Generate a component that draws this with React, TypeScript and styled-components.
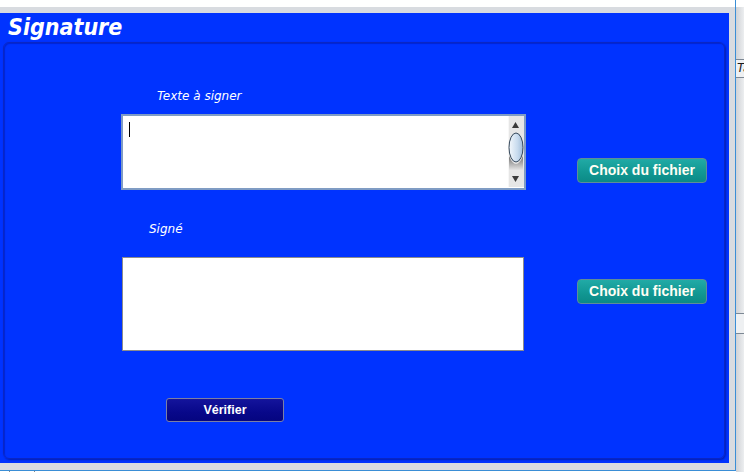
import React from "react";
import styled, { createGlobalStyle } from "styled-components";

const GlobalStyle = createGlobalStyle`
  html, body { margin: 0; padding: 0; background: #ffffff; }
  body { font-family: "DejaVu Sans", Verdana, sans-serif; }
  * { box-sizing: border-box; }
`;

const Screen = styled.div`
  display: flex;
  width: 744px;
  height: 472px;
  overflow: hidden;
  background: #ffffff;
`;

const MainColumn = styled.div`
  display: flex;
  flex-direction: column;
  width: 736px;
  flex: none;
`;

const Frame = styled.div`
  display: flex;
  flex-direction: column;
  height: 471px;
  border-right: 1px solid #3a8ed6;
  border-bottom: 1px solid #3a8ed6;
  background: #d8dbe0;
`;

const FrameTop = styled.div`
  height: 7px;
  flex: none;
  background: #ffffff;
`;

const FrameBody = styled.div`
  flex: 1;
  min-height: 0;
  display: flex;
  padding: 6px 6px 7px 0;
`;

const Window = styled.section`
  flex: 1;
  display: flex;
  flex-direction: column;
  background: #0033ff;
  padding: 0 4px 4px 3px;
`;

const Title = styled.h1`
  margin: 0;
  height: 29px;
  flex: none;
  padding-left: 5px;
  font: italic bold 23px/29px "DejaVu Sans Condensed", "DejaVu Sans", Verdana, sans-serif;
  font-stretch: condensed;
  color: #ffffff;
`;

const Panel = styled.div`
  flex: 1;
  display: flex;
  flex-direction: column;
  align-items: flex-start;
  padding: 46px 0 0 117px;
  border: 1px solid #0a26c4;
  border-radius: 6px;
  box-shadow: 1px 1px 2px rgba(0, 0, 90, 0.45), inset 1px 1px 1px rgba(0, 0, 110, 0.3);
`;

const FieldLabel = styled.div<{ $indent: number; $gap?: number }>`
  margin-left: ${(p) => p.$indent}px;
  margin-top: ${(p) => p.$gap ?? 0}px;
  font: italic 12px/15px "DejaVu Sans", Verdana, sans-serif;
  color: #ffffff;
`;

const FieldRow = styled.div<{ $gap: number }>`
  display: flex;
  align-items: flex-start;
  margin-top: ${(p) => p.$gap}px;
`;

const FieldColumn = styled.div`
  width: 456px;
  flex: none;
`;

const SourceBox = styled.div`
  display: flex;
  width: 405px;
  height: 76px;
  border: 2px solid #7f9cc4;
  background: #ffffff;
`;

const SourceText = styled.div`
  flex: 1;
  padding: 6px 0 0 6px;
`;

const Caret = styled.span`
  display: block;
  width: 1px;
  height: 15px;
  background: #000000;
`;

const ScrollTrack = styled.div`
  width: 16px;
  flex: none;
  display: flex;
`;

const SignedBox = styled.div`
  margin-left: 1px;
  width: 402px;
  height: 94px;
  border: 1px solid #8c8c8c;
  background: #ffffff;
`;

const FileButton = styled.button<{ $offset: number }>`
  margin-top: ${(p) => p.$offset}px;
  width: 130px;
  height: 25px;
  padding: 0;
  border: 1px solid #5f8d98;
  border-radius: 4px;
  background: linear-gradient(#21aaa6, #129893 55%, #0b8a86);
  color: #fffef4;
  font: bold 14px/23px "Liberation Sans", Arial, sans-serif;
  text-align: center;
  cursor: pointer;
`;

const VerifyButton = styled.button`
  margin-top: 47px;
  margin-left: 45px;
  width: 118px;
  height: 24px;
  padding: 0;
  border: 1px solid #7c80a4;
  border-radius: 3px;
  background: linear-gradient(#14149c, #08088a 60%, #050580);
  color: #ffffff;
  font: bold 12.5px/22px "Liberation Sans", Arial, sans-serif;
  text-align: center;
  cursor: pointer;
`;

const BottomLine = styled.div`
  height: 1px;
  display: flex;
  background: #ffffff;
`;

const Tick = styled.span<{ $left: number }>`
  margin-left: ${(p) => p.$left}px;
  width: 1px;
  height: 1px;
  background: #8a8a8a;
`;

const SideStrip = styled.aside`
  width: 8px;
  flex: none;
  display: flex;
  flex-direction: column;
  background: linear-gradient(90deg, #d0d2d6, #eceef0);
`;

const SideTop = styled.div`
  height: 7px;
  flex: none;
  background: #ffffff;
`;

const SideGap = styled.div<{ $h: number }>`
  height: ${(p) => p.$h}px;
  flex: none;
`;

const SideTab = styled.div<{ $h: number }>`
  height: ${(p) => p.$h}px;
  flex: none;
  border-top: 1px solid #7d8894;
  border-bottom: 1px solid #7d8894;
  background: #eef0f2;
  overflow: hidden;
  white-space: nowrap;
  padding-left: 1px;
  font: italic 12px/17px "DejaVu Sans", Verdana, sans-serif;
  color: #1a1a1a;
`;

function ScrollBar() {
  return (
    <svg width="16" height="71" viewBox="0 0 16 71">
      <defs>
        <linearGradient id="thumb" x1="0" y1="0" x2="1" y2="0">
          <stop offset="0" stopColor="#f4f8fc" />
          <stop offset="0.6" stopColor="#c8dbee" />
          <stop offset="1" stopColor="#9fbcd8" />
        </linearGradient>
        <linearGradient id="shade" x1="0" y1="0" x2="0" y2="1">
          <stop offset="0" stopColor="#6e6e6e" />
          <stop offset="1" stopColor="#e4e4e4" />
        </linearGradient>
      </defs>
      <rect x="0" y="0" width="16" height="71" fill="#e6e6e6" />
      <rect x="0" y="0" width="1" height="71" fill="#f7f7f7" />
      <polygon points="4,12 11,12 7.5,6" fill="#3a3a3a" />
      <path d="M1 40 Q8 56 15 40 L15 54 L1 54 Z" fill="url(#shade)" />
      <ellipse cx="8" cy="31.5" rx="7" ry="14.5" fill="url(#thumb)" stroke="#34475a" strokeWidth="1" />
      <polygon points="4,60 11,60 7.5,66" fill="#3a3a3a" />
    </svg>
  );
}

export default function App() {
  return (
    <>
      <GlobalStyle />
      <Screen>
        <MainColumn>
          <Frame>
            <FrameTop />
            <FrameBody>
              <Window>
                <Title>Signature</Title>
                <Panel>
                  <FieldLabel $indent={36}>Texte à signer</FieldLabel>
                  <FieldRow $gap={10}>
                    <FieldColumn>
                      <SourceBox>
                        <SourceText>
                          <Caret />
                        </SourceText>
                        <ScrollTrack>
                          <ScrollBar />
                        </ScrollTrack>
                      </SourceBox>
                    </FieldColumn>
                    <FileButton $offset={44}>Choix du fichier</FileButton>
                  </FieldRow>
                  <FieldLabel $indent={28} $gap={32}>
                    Signé
                  </FieldLabel>
                  <FieldRow $gap={20}>
                    <FieldColumn>
                      <SignedBox />
                    </FieldColumn>
                    <FileButton $offset={22}>Choix du fichier</FileButton>
                  </FieldRow>
                  <VerifyButton>Vérifier</VerifyButton>
                </Panel>
              </Window>
            </FrameBody>
          </Frame>
          <BottomLine>
            <Tick $left={9} />
            <Tick $left={24} />
          </BottomLine>
        </MainColumn>
        <SideStrip>
          <SideTop />
          <SideGap $h={52} />
          <SideTab $h={19}>Ta</SideTab>
          <SideGap $h={235} />
          <SideTab $h={21} />
        </SideStrip>
      </Screen>
    </>
  );
}
